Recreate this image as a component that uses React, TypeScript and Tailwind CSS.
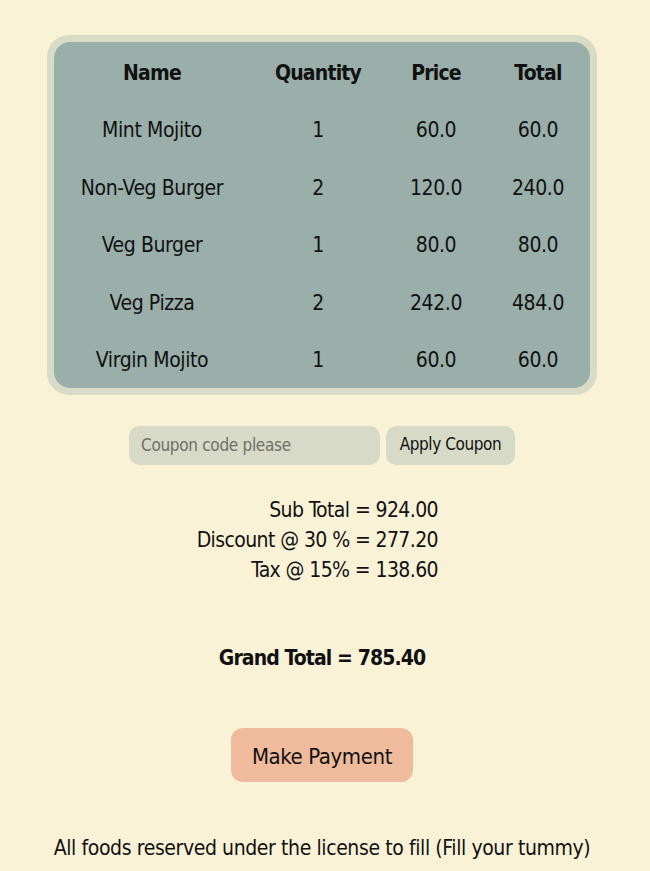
const ROWS = [
  { name: "Mint Mojito", qty: 1, price: "60.0", total: "60.0" },
  { name: "Non-Veg Burger", qty: 2, price: "120.0", total: "240.0" },
  { name: "Veg Burger", qty: 1, price: "80.0", total: "80.0" },
  { name: "Veg Pizza", qty: 2, price: "242.0", total: "484.0" },
  { name: "Virgin Mojito", qty: 1, price: "60.0", total: "60.0" },
];

const font = "font-['DejaVu_Sans_Condensed',sans-serif]";

export default function App() {
  return (
    <div className={`min-h-[871px] bg-[#faf2d6] text-[#111] ${font}`}>
      <div className="flex flex-col items-center pt-[35px]">
        {/* cart table */}
        <div className="ml-[-6px] rounded-[22px] bg-[#d8dcc7] p-[7px]">
          <table className="w-[536px] table-fixed rounded-[16px] bg-[#9aaeaa] text-center text-[21px] tracking-[-0.4px]">
            <colgroup>
              <col className="w-[196px]" />
              <col className="w-[136px]" />
              <col className="w-[100px]" />
              <col className="w-[104px]" />
            </colgroup>
            <thead>
              <tr className="h-[58px]">
                <th className="pt-[5px] font-bold tracking-[-0.8px]">Name</th>
                <th className="pt-[5px] font-bold tracking-[-0.8px]">Quantity</th>
                <th className="pt-[5px] font-bold tracking-[-0.8px]">Price</th>
                <th className="pt-[5px] font-bold tracking-[-0.8px]">Total</th>
              </tr>
            </thead>
            <tbody>
              {ROWS.map((r) => (
                <tr key={r.name} className="h-[57.5px]">
                  <td className="pt-[4px]">{r.name}</td>
                  <td className="pt-[4px]">{r.qty}</td>
                  <td className="pt-[4px]">{r.price}</td>
                  <td className="pt-[4px]">{r.total}</td>
                </tr>
              ))}
            </tbody>
          </table>
        </div>

        {/* coupon */}
        <div className="mt-[31px] ml-[-6px] flex gap-[6px]">
          <input
            placeholder="Coupon code please"
            className="h-[39px] w-[251px] rounded-[10px] bg-[#d6dac6] px-[12px] text-[17px] tracking-[-0.3px] text-[#333] outline-none placeholder:text-[#6f6f66]"
          />
          <button className="h-[39px] w-[129px] rounded-[10px] bg-[#d6dac6] text-[17px] tracking-[-0.4px]">
            Apply Coupon
          </button>
        </div>

        {/* summary */}
        <div className="mt-[30px] w-full pr-[212px] text-right text-[21px] leading-[30px] tracking-[-0.6px]">
          <div>Sub Total = 924.00</div>
          <div>Discount @ 30 % = 277.20</div>
          <div>Tax @ 15% = 138.60</div>
        </div>

        <div className="mt-[58px] ml-[-6px] text-[21px] font-bold leading-[30px] tracking-[-0.9px]">
          Grand Total = 785.40
        </div>

        <button className="mt-[55px] ml-[-6px] h-[54px] w-[182px] rounded-[12px] bg-[#efbb9c] pt-[4px] text-[22px] tracking-[-0.4px]">
          Make Payment
        </button>

        <p className="mt-[51px] ml-[-6px] text-[21px] leading-[30px] tracking-[-0.4px]">
          All foods reserved under the license to fill (Fill your tummy)
        </p>
      </div>
    </div>
  );
}
